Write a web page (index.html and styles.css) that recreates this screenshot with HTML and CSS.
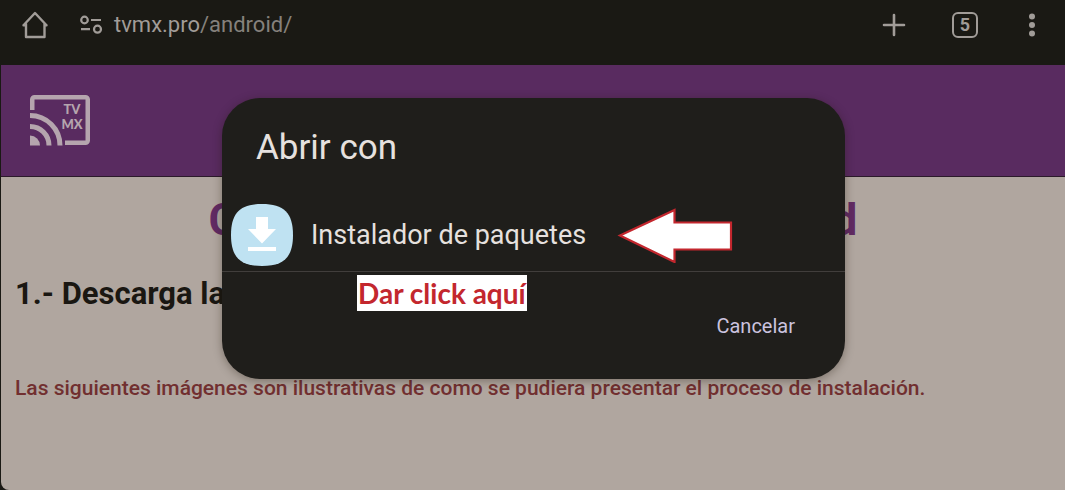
FILE: index.html
```html
<!DOCTYPE html>
<html lang="es">
<head>
<meta charset="utf-8">
<meta name="viewport" content="width=device-width, initial-scale=1">
<title>TVMX para Android</title>
<link rel="stylesheet" href="styles.css">
</head>
<body>
<header class="toolbar">
  <button class="tool" type="button" aria-label="Inicio">
    <svg width="28" height="28" viewBox="0 0 28 28" fill="none" stroke="currentColor" stroke-width="2.4" stroke-linecap="round" stroke-linejoin="round"><path d="M2.500 14.200 14 2l11.500 12.200M5 12.500V26h18.500V12.500M2.500 14.200H5M23.500 14.200h2"/></svg>
  </button>
  <div class="address">
    <svg class="site-icon" width="24" height="20" viewBox="0 0 24 20" fill="none" stroke="currentColor" stroke-width="2.200"><circle cx="4.500" cy="5" r="3.300"/><path d="M11 5h10M1 14.200h9"/><circle cx="17.500" cy="14.200" r="3.500"/></svg>
    <span class="url"><span class="domain">tvmx.pro</span>/android/</span>
  </div>
  <nav class="tools" aria-label="Navegador">
    <button class="tool" type="button" aria-label="Nueva pestaña">
      <svg width="28" height="28" viewBox="0 0 28 28" stroke="currentColor" stroke-width="2.600" stroke-linecap="round"><path d="M14 4v20M4 14h20"/></svg>
    </button>
    <button class="tool" type="button" aria-label="Pestañas"><span class="tab-count">5</span></button>
    <button class="tool menu" type="button" aria-label="Menú">
      <svg width="8" height="28" viewBox="0 0 8 28" fill="currentColor"><circle cx="4" cy="5.500" r="3"/><circle cx="4" cy="14" r="3"/><circle cx="4" cy="22.500" r="3"/></svg>
    </button>
  </nav>
</header>
<main class="page">
  <div class="banner">
    <svg class="logo" role="img" aria-label="TV MX" width="60" height="51" viewBox="0 0 60 51">
      <g fill="none" stroke="currentColor" stroke-width="4.500">
        <path d="M2.250 15V4.500a2.250 2.250 0 0 1 2.250-2.250h51a2.250 2.250 0 0 1 2.250 2.250v41a2.250 2.250 0 0 1-2.250 2.250H35"/>
        <path d="M0 20.500A30 30 0 0 1 30 50.500M0 31.500A19 19 0 0 1 19 50.500" stroke-width="5"/>
      </g>
      <path d="M0 40.500a10 10 0 0 1 10 10H0z" fill="currentColor"/>
      <text class="logo-text" x="42" y="19">TV</text>
      <text class="logo-text" x="42" y="34">MX</text>
    </svg>
  </div>
  <article class="content">
    <h1 class="title">Cómo instalar TVMX en Android</h1>
    <h2 class="step">1.- Descarga la app</h2>
    <p class="note">Las siguientes imágenes son ilustrativas de como se pudiera presentar el proceso de instalación.</p>
  </article>
</main>
<div class="overlay">
  <section class="dialog" role="dialog" aria-labelledby="dialog-title">
    <h2 class="dialog-title" id="dialog-title">Abrir con</h2>
    <div class="option">
      <button class="installer" type="button">
        <svg width="62" height="62" viewBox="0 0 62 62"><path d="M31 0C53 0 62 9 62 31S53 62 31 62 0 53 0 31 9 0 31 0z" fill="#bfe2f2"/><path d="M25 13h12v12h8L31 39.500 17 25h8zM17 43h28v4H17z" fill="#fff"/></svg>
        Instalador de paquetes
      </button>
      <svg class="arrow" width="116" height="56" viewBox="0 0 116 56"><path d="M3 28.500 57.500 3v12.500H114v27H57.500V55z" fill="#fff" stroke="#c3272e" stroke-width="2.200"/></svg>
    </div>
    <div class="hint-row"><strong class="hint">Dar click aquí</strong></div>
    <div class="actions"><button class="cancel" type="button">Cancelar</button></div>
  </section>
</div>
</body>
</html>
```
FILE: styles.css
```css
* { box-sizing: border-box; }

body {
  margin: 0;
  min-height: 100vh;
  display: flex;
  flex-direction: column;
  position: relative;
  background: #1a1914;
  font-family: Roboto, sans-serif;
}

button {
  border: 0;
  padding: 0;
  background: none;
  color: inherit;
  font: inherit;
  cursor: pointer;
}

h1, h2, p { margin: 0; }
svg { display: block; flex: none; }

.toolbar {
  height: 65px;
  padding: 0 29px 16px 21px;
  display: flex;
  align-items: center;
  color: #a19c98;
}

.tool {
  display: flex;
  align-items: center;
  justify-content: center;
}

.address {
  flex: 1;
  display: flex;
  align-items: center;
  gap: 10px;
  margin-left: 31px;
}

.url {
  font-size: 22px;
  line-height: 32px;
  color: #85817c;
}

.domain { color: #a19c98; }

.tools {
  display: flex;
  align-items: center;
  gap: 44px;
}

.tab-count {
  width: 26px;
  height: 26px;
  border: 2px solid currentColor;
  border-radius: 6px;
  font-size: 18px;
  line-height: 22px;
  font-weight: 700;
}

.menu { margin-left: 6px; }

.page {
  flex: 1;
  margin-left: 1px;
  background: #b0a69f;
  border-bottom-left-radius: 8px;
}

.banner {
  height: 112px;
  padding: 30px 29px;
  background: #592b60;
  border-bottom: 1px solid #2b1a2a;
  color: #b5a5ae;
}

.logo-text {
  fill: currentColor;
  font: 900 13px Lato, sans-serif;
  text-anchor: middle;
}

.content { padding: 16px 14px; }

.title {
  font-size: 45px;
  line-height: 54px;
  text-align: center;
  color: #612b63;
}

.step {
  margin-top: 27px;
  font-size: 31px;
  line-height: 40px;
  color: #1a1712;
}

.note {
  margin-top: 58px;
  font-size: 21px;
  line-height: 32px;
  font-weight: 500;
  color: #712f30;
}

.overlay {
  position: absolute;
  inset: 0;
  display: flex;
  align-items: flex-start;
  justify-content: center;
  padding: 98px 16px 0 18px;
}

.dialog {
  width: 100%;
  max-width: 623px;
  padding-bottom: 39px;
  border-radius: 38px;
  background: #1f1e1b;
  box-shadow: 0 2px 10px rgba(30, 20, 10, 0.35);
  color: #e6e1df;
}

.dialog-title {
  padding: 28px 34px;
  font-size: 35px;
  line-height: 44px;
  font-weight: 400;
}

.option {
  display: flex;
  align-items: center;
  gap: 31px;
  padding: 6px 9px 5px;
  border-bottom: 1px solid #413e3c;
}

.installer {
  display: flex;
  align-items: center;
  gap: 18px;
  font-size: 27px;
  line-height: 36px;
}

.hint-row {
  display: flex;
  padding: 3px 135px 0;
}

.hint {
  padding: 0 1px;
  background: #fff;
  color: #c3272e;
  font: 700 28px/36px Lato, sans-serif;
}

.actions {
  display: flex;
  justify-content: flex-end;
  padding: 1px 50px 0;
}

.cancel {
  color: #cbc3df;
  font-size: 20px;
  line-height: 28px;
}
```
